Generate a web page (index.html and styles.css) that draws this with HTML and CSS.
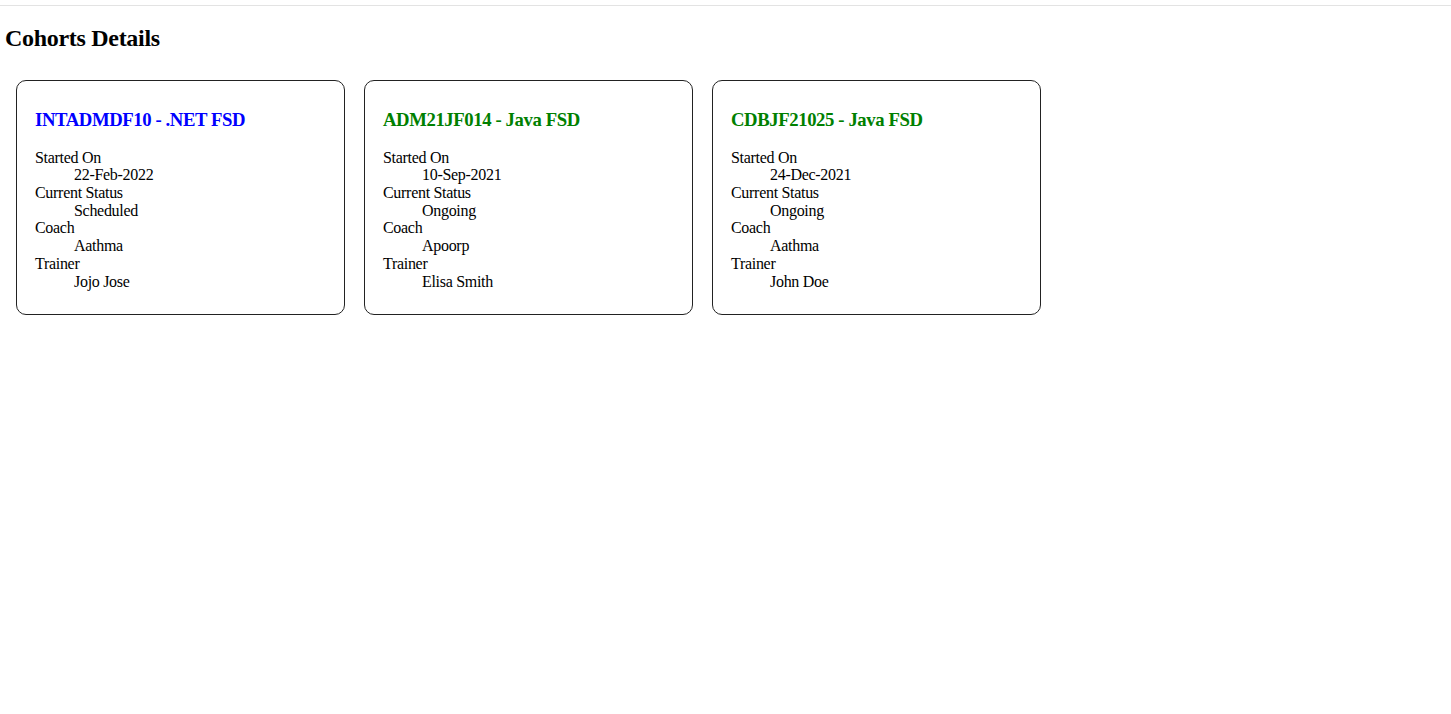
FILE: index.html
```html
<!DOCTYPE html>
<html lang="en">
<head>
<meta charset="utf-8">
<title>Cohorts Details</title>
<link rel="stylesheet" href="styles.css">
</head>
<body>
<div class="topbar"></div>
<main class="page">
  <h2 class="page-title">Cohorts Details</h2>
  <div class="cards">
    <section class="card">
      <h3 class="card-title scheduled">INTADMDF10 - .NET FSD</h3>
      <dl class="details">
        <dt>Started On</dt><dd>22-Feb-2022</dd>
        <dt>Current Status</dt><dd>Scheduled</dd>
        <dt>Coach</dt><dd>Aathma</dd>
        <dt>Trainer</dt><dd>Jojo Jose</dd>
      </dl>
    </section>
    <section class="card">
      <h3 class="card-title ongoing">ADM21JF014 - Java FSD</h3>
      <dl class="details">
        <dt>Started On</dt><dd>10-Sep-2021</dd>
        <dt>Current Status</dt><dd>Ongoing</dd>
        <dt>Coach</dt><dd>Apoorp</dd>
        <dt>Trainer</dt><dd>Elisa Smith</dd>
      </dl>
    </section>
    <section class="card">
      <h3 class="card-title ongoing">CDBJF21025 - Java FSD</h3>
      <dl class="details">
        <dt>Started On</dt><dd>24-Dec-2021</dd>
        <dt>Current Status</dt><dd>Ongoing</dd>
        <dt>Coach</dt><dd>Aathma</dd>
        <dt>Trainer</dt><dd>John Doe</dd>
      </dl>
    </section>
  </div>
</main>
</body>
</html>
```

FILE: styles.css
```css
html, body {
  margin: 0;
  padding: 0;
  background: #fff;
  color: #000;
  font-family: "Liberation Serif", "Times New Roman", serif;
  font-size: 16px;
  letter-spacing: -0.3px;
}

.topbar {
  margin-top: 5px;
  height: 1px;
  background: #e3e3e3;
}

.page {
  padding: 0 5px;
}

.page-title {
  font-size: 24px;
  font-weight: bold;
  line-height: 26.6px;
  margin: 19px 0 28px 0;
}

.cards {
  display: flex;
  gap: 19px;
  padding-left: 11px;
  align-items: flex-start;
}

.card {
  width: 291px;
  border: 1px solid #222;
  border-radius: 10px;
  padding: 9px 18px;
}

.card-title {
  font-size: 18.72px;
  line-height: 20.7px;
  font-weight: bold;
  letter-spacing: -0.4px;
  margin: 20.7px 0 17.7px 0;
}

.card-title.scheduled {
  color: #0000ff;
}

.card-title.ongoing {
  color: #008000;
}

.details {
  margin: 0 0 15px 0;
  line-height: 17.7px;
}

.details dt {
  margin: 0;
}

.details dd {
  margin: 0 0 0 39px;
}
```
